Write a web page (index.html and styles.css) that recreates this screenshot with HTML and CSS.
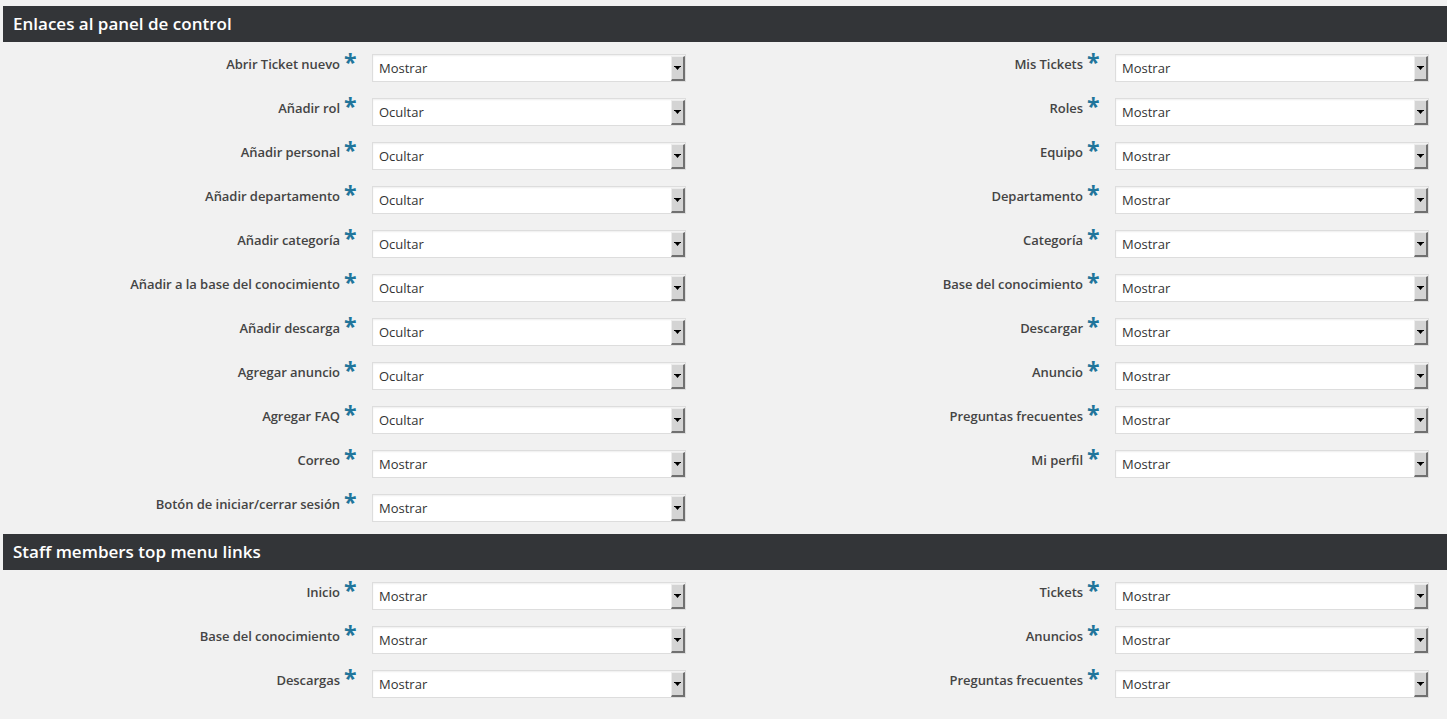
FILE: index.html
```html
<!DOCTYPE html>
<html lang="es">
<head>
<meta charset="utf-8">
<title>Enlaces al panel de control</title>
<link rel="stylesheet" href="styles.css">
</head>
<body>
<div class="page">
  <section class="section">
    <h2 class="section-title">Enlaces al panel de control</h2>
    <div class="fields">
      <div class="field"><span class="label">Abrir Ticket nuevo</span><span class="req">*</span><div class="select"><span class="value">Mostrar</span><span class="btn"><svg width="7" height="5" viewBox="0 0 7 5"><path d="M0 0h7v1H0zM1 1h5L3.5 4z" fill="#000"/></svg></span></div></div>
      <div class="field"><span class="label">Mis Tickets</span><span class="req">*</span><div class="select"><span class="value">Mostrar</span><span class="btn"><svg width="7" height="5" viewBox="0 0 7 5"><path d="M0 0h7v1H0zM1 1h5L3.5 4z" fill="#000"/></svg></span></div></div>
      <div class="field"><span class="label">Añadir rol</span><span class="req">*</span><div class="select"><span class="value">Ocultar</span><span class="btn"><svg width="7" height="5" viewBox="0 0 7 5"><path d="M0 0h7v1H0zM1 1h5L3.5 4z" fill="#000"/></svg></span></div></div>
      <div class="field"><span class="label">Roles</span><span class="req">*</span><div class="select"><span class="value">Mostrar</span><span class="btn"><svg width="7" height="5" viewBox="0 0 7 5"><path d="M0 0h7v1H0zM1 1h5L3.5 4z" fill="#000"/></svg></span></div></div>
      <div class="field"><span class="label">Añadir personal</span><span class="req">*</span><div class="select"><span class="value">Ocultar</span><span class="btn"><svg width="7" height="5" viewBox="0 0 7 5"><path d="M0 0h7v1H0zM1 1h5L3.5 4z" fill="#000"/></svg></span></div></div>
      <div class="field"><span class="label">Equipo</span><span class="req">*</span><div class="select"><span class="value">Mostrar</span><span class="btn"><svg width="7" height="5" viewBox="0 0 7 5"><path d="M0 0h7v1H0zM1 1h5L3.5 4z" fill="#000"/></svg></span></div></div>
      <div class="field"><span class="label">Añadir departamento</span><span class="req">*</span><div class="select"><span class="value">Ocultar</span><span class="btn"><svg width="7" height="5" viewBox="0 0 7 5"><path d="M0 0h7v1H0zM1 1h5L3.5 4z" fill="#000"/></svg></span></div></div>
      <div class="field"><span class="label">Departamento</span><span class="req">*</span><div class="select"><span class="value">Mostrar</span><span class="btn"><svg width="7" height="5" viewBox="0 0 7 5"><path d="M0 0h7v1H0zM1 1h5L3.5 4z" fill="#000"/></svg></span></div></div>
      <div class="field"><span class="label">Añadir categoría</span><span class="req">*</span><div class="select"><span class="value">Ocultar</span><span class="btn"><svg width="7" height="5" viewBox="0 0 7 5"><path d="M0 0h7v1H0zM1 1h5L3.5 4z" fill="#000"/></svg></span></div></div>
      <div class="field"><span class="label">Categoría</span><span class="req">*</span><div class="select"><span class="value">Mostrar</span><span class="btn"><svg width="7" height="5" viewBox="0 0 7 5"><path d="M0 0h7v1H0zM1 1h5L3.5 4z" fill="#000"/></svg></span></div></div>
      <div class="field"><span class="label">Añadir a la base del conocimiento</span><span class="req">*</span><div class="select"><span class="value">Ocultar</span><span class="btn"><svg width="7" height="5" viewBox="0 0 7 5"><path d="M0 0h7v1H0zM1 1h5L3.5 4z" fill="#000"/></svg></span></div></div>
      <div class="field"><span class="label">Base del conocimiento</span><span class="req">*</span><div class="select"><span class="value">Mostrar</span><span class="btn"><svg width="7" height="5" viewBox="0 0 7 5"><path d="M0 0h7v1H0zM1 1h5L3.5 4z" fill="#000"/></svg></span></div></div>
      <div class="field"><span class="label">Añadir descarga</span><span class="req">*</span><div class="select"><span class="value">Ocultar</span><span class="btn"><svg width="7" height="5" viewBox="0 0 7 5"><path d="M0 0h7v1H0zM1 1h5L3.5 4z" fill="#000"/></svg></span></div></div>
      <div class="field"><span class="label">Descargar</span><span class="req">*</span><div class="select"><span class="value">Mostrar</span><span class="btn"><svg width="7" height="5" viewBox="0 0 7 5"><path d="M0 0h7v1H0zM1 1h5L3.5 4z" fill="#000"/></svg></span></div></div>
      <div class="field"><span class="label">Agregar anuncio</span><span class="req">*</span><div class="select"><span class="value">Ocultar</span><span class="btn"><svg width="7" height="5" viewBox="0 0 7 5"><path d="M0 0h7v1H0zM1 1h5L3.5 4z" fill="#000"/></svg></span></div></div>
      <div class="field"><span class="label">Anuncio</span><span class="req">*</span><div class="select"><span class="value">Mostrar</span><span class="btn"><svg width="7" height="5" viewBox="0 0 7 5"><path d="M0 0h7v1H0zM1 1h5L3.5 4z" fill="#000"/></svg></span></div></div>
      <div class="field"><span class="label">Agregar FAQ</span><span class="req">*</span><div class="select"><span class="value">Ocultar</span><span class="btn"><svg width="7" height="5" viewBox="0 0 7 5"><path d="M0 0h7v1H0zM1 1h5L3.5 4z" fill="#000"/></svg></span></div></div>
      <div class="field"><span class="label">Preguntas frecuentes</span><span class="req">*</span><div class="select"><span class="value">Mostrar</span><span class="btn"><svg width="7" height="5" viewBox="0 0 7 5"><path d="M0 0h7v1H0zM1 1h5L3.5 4z" fill="#000"/></svg></span></div></div>
      <div class="field"><span class="label">Correo</span><span class="req">*</span><div class="select"><span class="value">Mostrar</span><span class="btn"><svg width="7" height="5" viewBox="0 0 7 5"><path d="M0 0h7v1H0zM1 1h5L3.5 4z" fill="#000"/></svg></span></div></div>
      <div class="field"><span class="label">Mi perfil</span><span class="req">*</span><div class="select"><span class="value">Mostrar</span><span class="btn"><svg width="7" height="5" viewBox="0 0 7 5"><path d="M0 0h7v1H0zM1 1h5L3.5 4z" fill="#000"/></svg></span></div></div>
      <div class="field"><span class="label">Botón de iniciar/cerrar sesión</span><span class="req">*</span><div class="select"><span class="value">Mostrar</span><span class="btn"><svg width="7" height="5" viewBox="0 0 7 5"><path d="M0 0h7v1H0zM1 1h5L3.5 4z" fill="#000"/></svg></span></div></div>
    </div>
  </section>
  <section class="section">
    <h2 class="section-title">Staff members top menu links</h2>
    <div class="fields">
      <div class="field"><span class="label">Inicio</span><span class="req">*</span><div class="select"><span class="value">Mostrar</span><span class="btn"><svg width="7" height="5" viewBox="0 0 7 5"><path d="M0 0h7v1H0zM1 1h5L3.5 4z" fill="#000"/></svg></span></div></div>
      <div class="field"><span class="label">Tickets</span><span class="req">*</span><div class="select"><span class="value">Mostrar</span><span class="btn"><svg width="7" height="5" viewBox="0 0 7 5"><path d="M0 0h7v1H0zM1 1h5L3.5 4z" fill="#000"/></svg></span></div></div>
      <div class="field"><span class="label">Base del conocimiento</span><span class="req">*</span><div class="select"><span class="value">Mostrar</span><span class="btn"><svg width="7" height="5" viewBox="0 0 7 5"><path d="M0 0h7v1H0zM1 1h5L3.5 4z" fill="#000"/></svg></span></div></div>
      <div class="field"><span class="label">Anuncios</span><span class="req">*</span><div class="select"><span class="value">Mostrar</span><span class="btn"><svg width="7" height="5" viewBox="0 0 7 5"><path d="M0 0h7v1H0zM1 1h5L3.5 4z" fill="#000"/></svg></span></div></div>
      <div class="field"><span class="label">Descargas</span><span class="req">*</span><div class="select"><span class="value">Mostrar</span><span class="btn"><svg width="7" height="5" viewBox="0 0 7 5"><path d="M0 0h7v1H0zM1 1h5L3.5 4z" fill="#000"/></svg></span></div></div>
      <div class="field"><span class="label">Preguntas frecuentes</span><span class="req">*</span><div class="select"><span class="value">Mostrar</span><span class="btn"><svg width="7" height="5" viewBox="0 0 7 5"><path d="M0 0h7v1H0zM1 1h5L3.5 4z" fill="#000"/></svg></span></div></div>
    </div>
  </section>
</div>
</body>
</html>
```

FILE: styles.css
```css
html, body {
  margin: 0;
  padding: 0;
  background: #f1f1f1;
}
body {
  font-family: "Open Sans", "Noto Sans", sans-serif;
  color: #444;
}
.page {
  padding: 6px 0 0 3px;
}
.section {
  margin-bottom: 8px;
}
.section-title {
  margin: 0;
  height: 36px;
  line-height: 36px;
  padding-left: 10px;
  background: #333538;
  color: #fff;
  font-size: 17px;
  font-weight: 600;
}
.fields {
  display: grid;
  grid-template-columns: 743px 1fr;
}
.field {
  display: flex;
  align-items: flex-start;
  height: 44px;
  padding-top: 12px;
  box-sizing: border-box;
}
.label {
  width: 337px;
  text-align: right;
  font-size: 13px;
  font-weight: 600;
  line-height: 20px;
  margin-top: 0;
  letter-spacing: -0.05px;
  color: #444;
  white-space: nowrap;
}
.req {
  width: 10px;
  margin-left: 4px;
  margin-right: 18px;
  color: #21759b;
  font-size: 23px;
  font-weight: 700;
  line-height: 23px;
  margin-top: -3px;
}
.select {
  width: 314px;
  height: 28px;
  box-sizing: border-box;
  border: 1px solid #ddd;
  background: #fff;
  box-shadow: inset 0 1px 2px rgba(0,0,0,0.07);
  display: flex;
  align-items: stretch;
  padding: 1px 0 0 0;
}
.value {
  flex: 1;
  font-size: 13px;
  line-height: 25px;
  padding-left: 6px;
  color: #333;
}
.btn {
  width: 14px;
  box-sizing: border-box;
  background: #d4d4d4;
  border-top: 1px solid #ececec;
  border-left: 1px solid #ececec;
  border-right: 2px solid #707070;
  border-bottom: 2px solid #707070;
  display: flex;
  align-items: center;
  justify-content: center;
}
.btn svg {
  display: block;
}
```
